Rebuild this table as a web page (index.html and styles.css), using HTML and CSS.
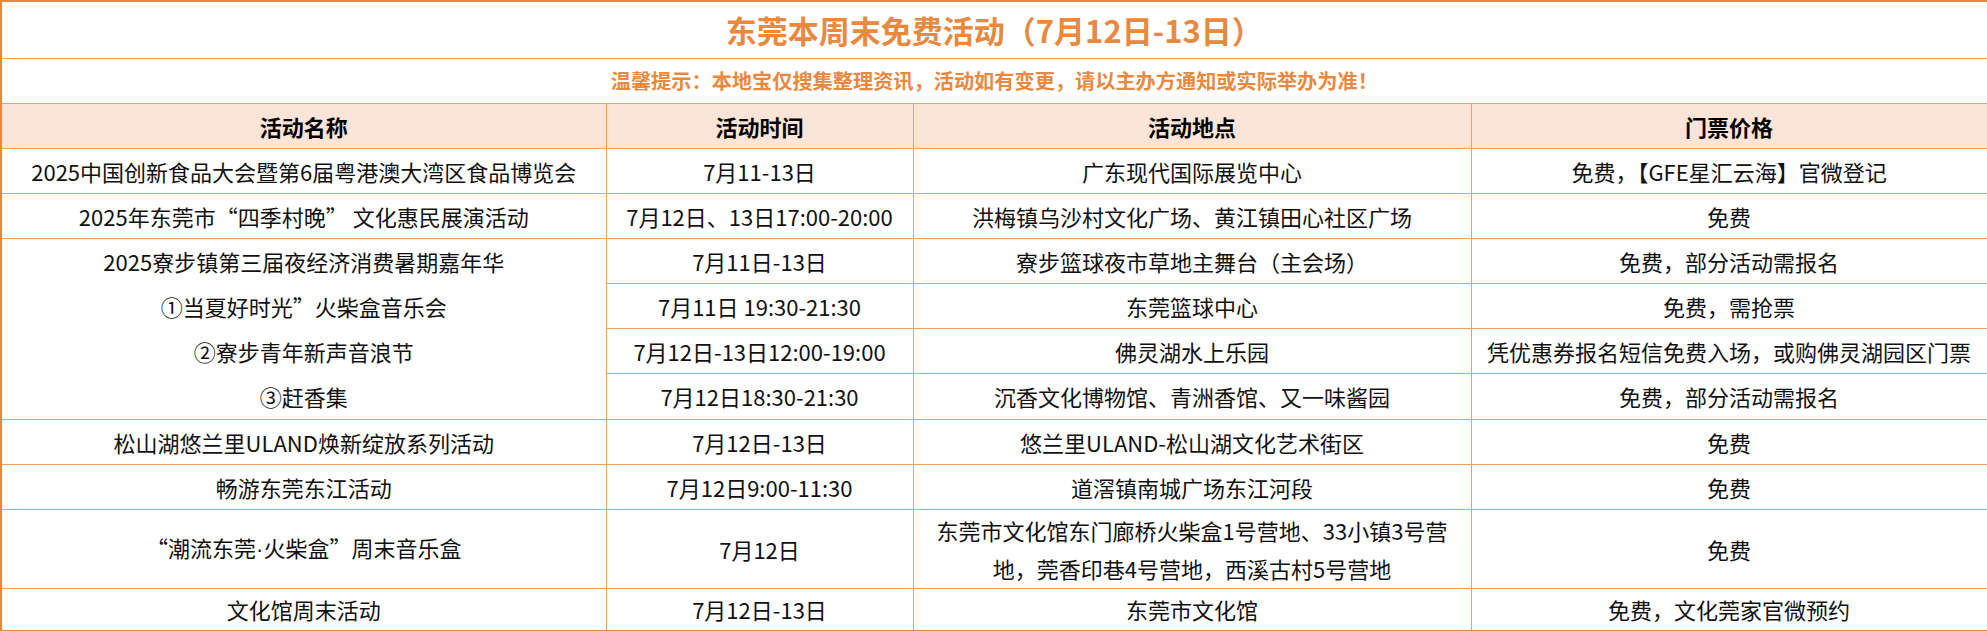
FILE: index.html
```html
<!DOCTYPE html>
<html lang="zh-CN">
<head>
<meta charset="utf-8">
<title>东莞本周末免费活动</title>
<link rel="stylesheet" href="styles.css">
</head>
<body>
<table class="events">
  <colgroup>
    <col class="c-name">
    <col class="c-time">
    <col class="c-place">
    <col class="c-price">
  </colgroup>
  <tr class="r-title"><td colspan="4" class="title">东莞本周末免费活动（7月12日-13日）</td></tr>
  <tr class="r-tip"><td colspan="4" class="tip">温馨提示：本地宝仅搜集整理资讯，活动如有变更，请以主办方通知或实际举办为准！</td></tr>
  <tr class="r-head">
    <th>活动名称</th><th>活动时间</th><th>活动地点</th><th>门票价格</th>
  </tr>
  <tr class="r">
    <td>2025中国创新食品大会暨第6届粤港澳大湾区食品博览会</td>
    <td>7月11-13日</td>
    <td>广东现代国际展览中心</td>
    <td>免费，【GFE星汇云海】官微登记</td>
  </tr>
  <tr class="r">
    <td>2025年东莞市“四季村晚” 文化惠民展演活动</td>
    <td>7月12日、13日17:00-20:00</td>
    <td>洪梅镇乌沙村文化广场、黄江镇田心社区广场</td>
    <td>免费</td>
  </tr>
  <tr class="r">
    <td rowspan="4" class="merged">
      <div class="line">2025寮步镇第三届夜经济消费暑期嘉年华</div>
      <div class="line">①当夏好时光”火柴盒音乐会</div>
      <div class="line">②寮步青年新声音浪节</div>
      <div class="line">③赶香集</div>
    </td>
    <td>7月11日-13日</td>
    <td>寮步篮球夜市草地主舞台（主会场）</td>
    <td>免费，部分活动需报名</td>
  </tr>
  <tr class="r">
    <td>7月11日 19:30-21:30</td>
    <td>东莞篮球中心</td>
    <td>免费，需抢票</td>
  </tr>
  <tr class="r">
    <td>7月12日-13日12:00-19:00</td>
    <td>佛灵湖水上乐园</td>
    <td>凭优惠券报名短信免费入场，或购佛灵湖园区门票</td>
  </tr>
  <tr class="r">
    <td>7月12日18:30-21:30</td>
    <td>沉香文化博物馆、青洲香馆、又一味酱园</td>
    <td>免费，部分活动需报名</td>
  </tr>
  <tr class="r">
    <td>松山湖悠兰里ULAND焕新绽放系列活动</td>
    <td>7月12日-13日</td>
    <td>悠兰里ULAND-松山湖文化艺术街区</td>
    <td>免费</td>
  </tr>
  <tr class="r">
    <td>畅游东莞东江活动</td>
    <td>7月12日9:00-11:30</td>
    <td>道滘镇南城广场东江河段</td>
    <td>免费</td>
  </tr>
  <tr class="r-double">
    <td>“潮流东莞<span class="narrow">·</span>火柴盒”周末音乐盒</td>
    <td>7月12日</td>
    <td class="two-line">东莞市文化馆东门廊桥火柴盒1号营地、33小镇3号营<br>地，莞香印巷4号营地，西溪古村5号营地</td>
    <td>免费</td>
  </tr>
  <tr class="r-last">
    <td>文化馆周末活动</td>
    <td>7月12日-13日</td>
    <td>东莞市文化馆</td>
    <td>免费，文化莞家官微预约</td>
  </tr>
</table>
</body>
</html>
```

FILE: styles.css
```css
html, body {
  margin: 0;
  padding: 0;
  background: #ffffff;
}

body {
  font-family: "Noto Sans CJK SC", "Noto Sans", sans-serif;
  color: #111111;
}

.events {
  width: 1987px;
  table-layout: fixed;
  border-collapse: collapse;
  border: 2px solid #e8883c;
  border-right-width: 3px;
}

.c-name { width: 605px; }
.c-time { width: 307px; }
.c-place { width: 558px; }
.c-price { width: 517px; }

.events td,
.events th {
  border: 1px solid #eda060;
  padding: 0;
  text-align: center;
  vertical-align: middle;
  font-size: 22px;
  font-weight: 400;
  line-height: 30px;
  white-space: nowrap;
}

.r-title { height: 57px; }
.r-tip { height: 45px; }
.r-head { height: 45px; }
.r { height: 45px; }
.r-double { height: 79px; }
.r-last { height: 43px; }

.events .title {
  font-size: 31px;
  font-weight: 700;
  color: #e8893f;
}

.events .tip {
  font-size: 20.2px;
  font-weight: 700;
  color: #e8893f;
}

.events th {
  background: #fce4d6;
  font-weight: 700;
  color: #000000;
}

.events .merged {
  vertical-align: top;
}

.merged .line {
  height: 45px;
  line-height: 45px;
}

.events .two-line {
  line-height: 38px;
}

.narrow {
  font-family: "Liberation Sans", sans-serif;
}
```
